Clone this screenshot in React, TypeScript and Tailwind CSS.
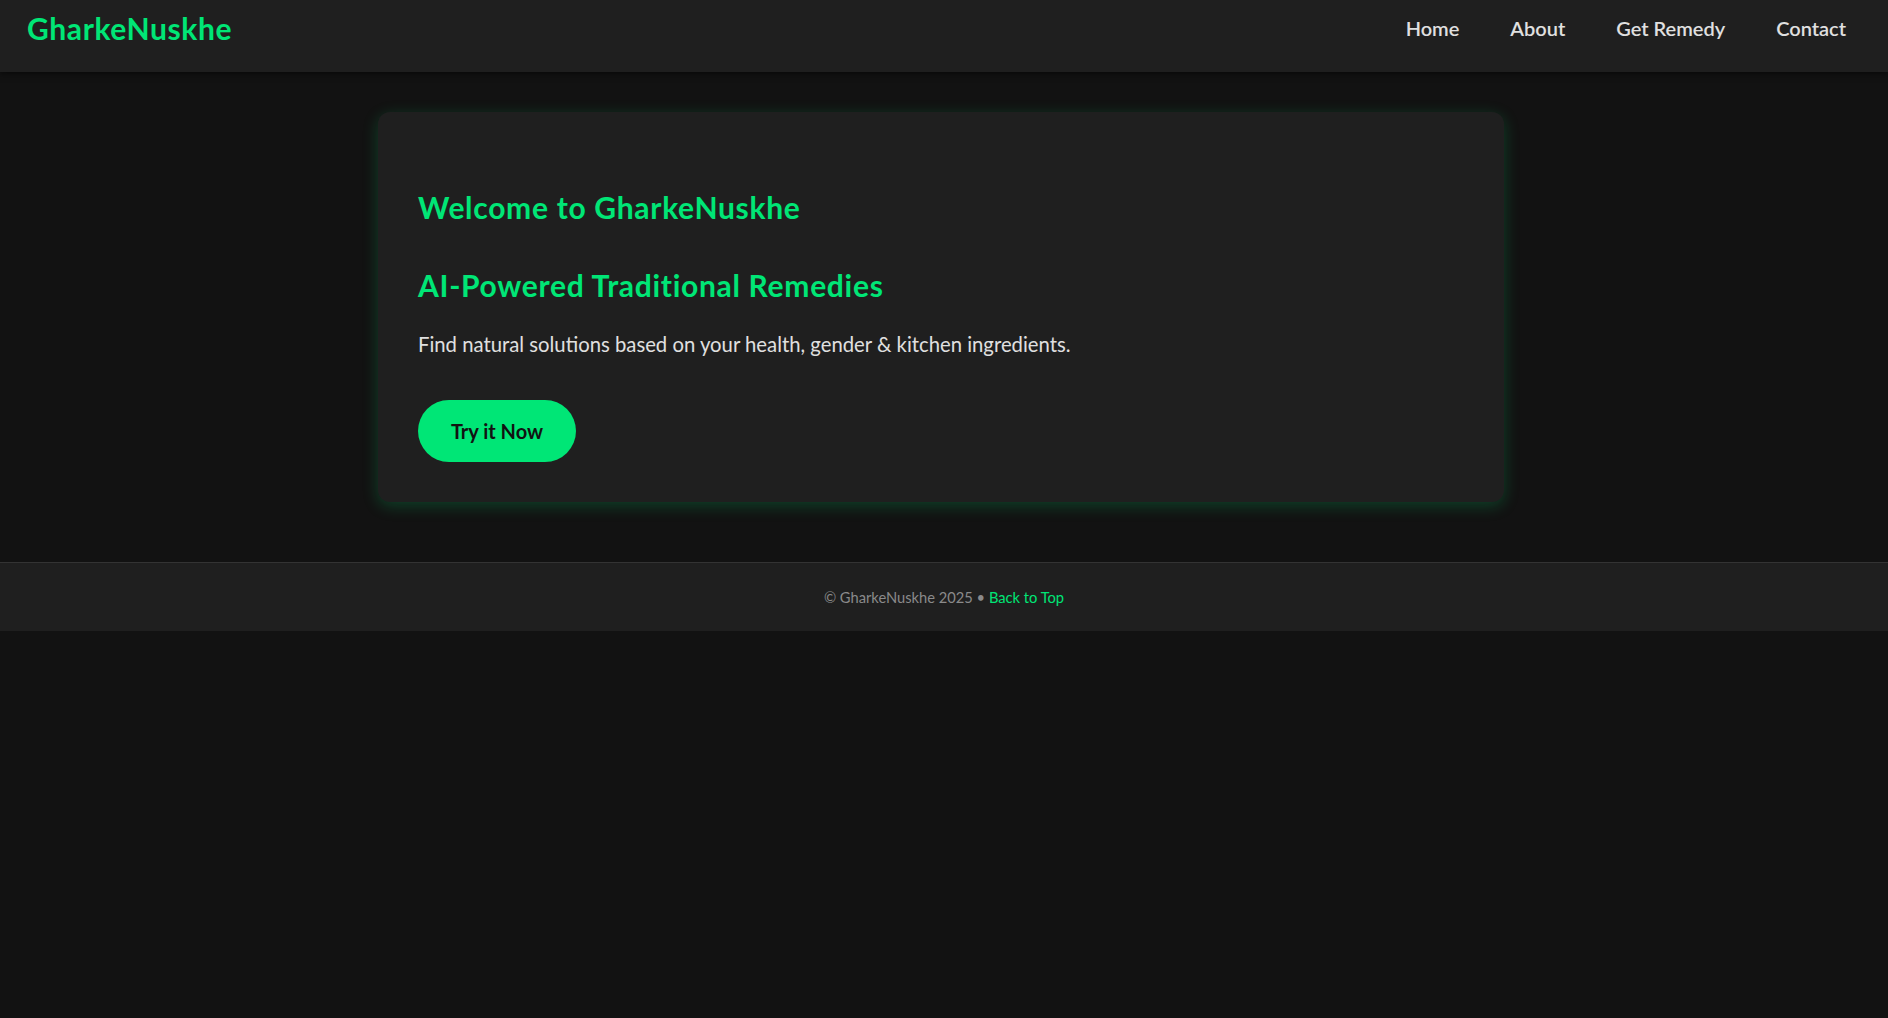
import React from "react";

export default function App() {
  return (
    <div className="min-h-screen bg-[#121212] text-[#e0e0e0]" style={{ fontFamily: "Lato, 'Noto Sans', sans-serif" }}>
      <header className="h-[72px] bg-[#1f1f1f] shadow-[0_2px_6px_rgba(0,0,0,0.5)] flex items-start justify-between pl-[27px] pr-[42px] relative z-10">
        <div className="mt-[10px] text-[30px] tracking-[0.6px] leading-[1.2] font-bold text-[#00e676]">GharkeNuskhe</div>
        <nav className="mt-[16px] flex gap-[51px] text-[20px] leading-[1.2] font-semibold text-[#e0e0e0]">
          <a>Home</a>
          <a>About</a>
          <a>Get Remedy</a>
          <a>Contact</a>
        </nav>
      </header>
      <main className="pt-[40px] pb-[60px] pr-[6px]">
        <section className="w-[1126px] mx-auto bg-[#1f1f1f] rounded-[12px] p-[40px] shadow-[0_4px_16px_rgba(0,230,118,0.22)]">
          <h1 className="mt-[37px] text-[30px] tracking-[0.7px] leading-[1.2] font-bold text-[#00e676]">Welcome to GharkeNuskhe</h1>
          <h2 className="mt-[42px] text-[30px] tracking-[0.7px] leading-[1.2] font-bold text-[#00e676]">AI-Powered Traditional Remedies</h2>
          <p className="mt-[29px] text-[20.3px] leading-[1.2] text-[#e0e0e0]">
            Find natural solutions based on your health, gender &amp; kitchen ingredients.
          </p>
          <button className="mt-[44px] h-[62px] w-[158px] rounded-full bg-[#00e676] text-[#121212] text-[20px] font-bold">
            Try it Now
          </button>
        </section>
      </main>
      <footer className="border-t border-[#333333] bg-[#1f1f1f] h-[69px] flex items-center justify-center text-[14.7px] text-[#8a8a8a]">
        <span>
          © GharkeNuskhe 2025 • <a className="text-[#00e676]">Back to Top</a>
        </span>
      </footer>
    </div>
  );
}
